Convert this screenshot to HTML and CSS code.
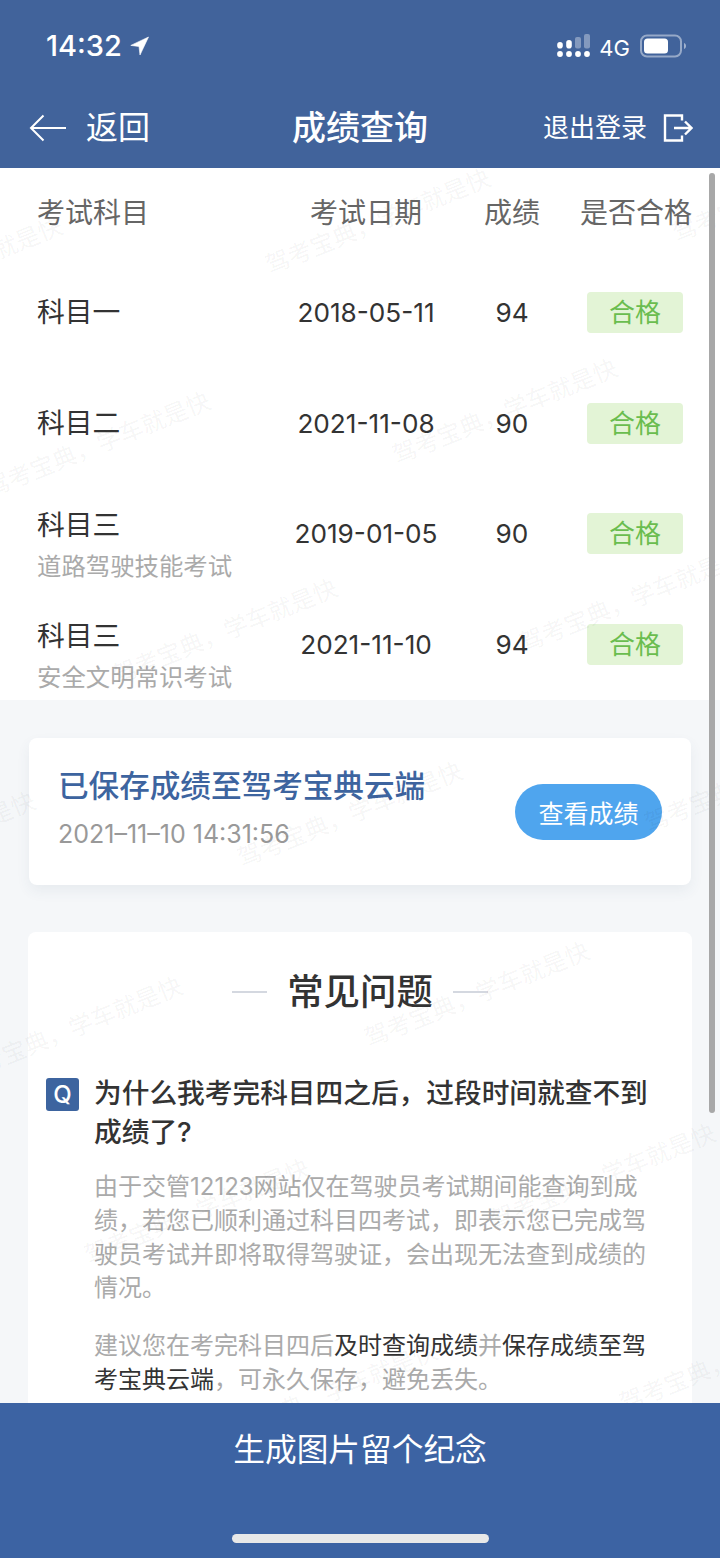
FILE: index.html
```html
<!DOCTYPE html>
<html lang="zh-CN">
<head>
<meta charset="utf-8">
<title>成绩查询</title>
<link rel="stylesheet" href="styles.css">
</head>
<body>
<div class="phone">
  <header class="top">
    <div class="status">
      <div class="clock">
        <span>14:32</span>
        <svg class="loc" viewBox="0 0 20 20" width="20" height="20"><path d="M18.500 1 .8 9.400 9 10.500 10 19z" fill="#fff" stroke="#fff" stroke-width=".6" stroke-linejoin="round"/></svg>
      </div>
      <div class="status-right">
        <svg class="signal" viewBox="0 0 33 24" width="33" height="24">
          <g fill="#fff">
            <circle cx="3" cy="20" r="2.900"/><circle cx="12" cy="20" r="2.900"/><circle cx="21" cy="20" r="2.900"/><circle cx="30" cy="20" r="2.900"/>
            <rect x="0.200" y="8" width="5.600" height="6.500" rx="2.800"/><rect x="9.200" y="6" width="5.600" height="8.500" rx="2.800"/>
          </g>
          <g fill="#fff" opacity=".35">
            <rect x="18" y="3" width="6" height="11.500" rx="2"/><rect x="27" y="0" width="6" height="14.500" rx="2"/>
          </g>
        </svg>
        <span class="net">4G</span>
        <svg class="battery" viewBox="0 0 46 24" width="46" height="24">
          <rect x="1" y="1.500" width="40" height="21" rx="6" fill="none" stroke="#fff" stroke-opacity=".45" stroke-width="2"/>
          <rect x="4" y="4.500" width="24" height="15" rx="3.500" fill="#fff"/>
          <path d="M44 9c1.500.5 2 1.700 2 3s-.5 2.500-2 3z" fill="#fff" fill-opacity=".5"/>
        </svg>
      </div>
    </div>
    <nav class="nav">
      <div class="back">
        <svg viewBox="0 0 38 28" width="38" height="28"><path d="M37 14H2M14.500 1.500 2 14l12.500 12.500" fill="none" stroke="#fff" stroke-width="2"/></svg>
        <span>返回</span>
      </div>
      <h1 class="title">成绩查询</h1>
      <div class="logout">
        <span>退出登录</span>
        <svg viewBox="0 0 30 28" width="30" height="28"><path d="M19 6.500V1.500H2v25h17v-5M11 14h17.500M22 7.500l6.500 6.500-6.500 6.500" fill="none" stroke="#fff" stroke-width="2.400"/></svg>
      </div>
    </nav>
  </header>

  <main class="content">
    <section class="table">
      <div class="row head">
        <div class="c-sub">考试科目</div><div class="c-date">考试日期</div><div class="c-score">成绩</div><div class="c-pass">是否合格</div>
      </div>
      <div class="row">
        <div class="c-sub">科目一</div><div class="c-date">2018-05-11</div><div class="c-score">94</div><div class="c-pass"><span class="badge">合格</span></div>
      </div>
      <div class="row">
        <div class="c-sub">科目二</div><div class="c-date">2021-11-08</div><div class="c-score">90</div><div class="c-pass"><span class="badge">合格</span></div>
      </div>
      <div class="row">
        <div class="c-sub two">科目三<small>道路驾驶技能考试</small></div><div class="c-date">2019-01-05</div><div class="c-score">90</div><div class="c-pass"><span class="badge">合格</span></div>
      </div>
      <div class="row">
        <div class="c-sub two">科目三<small>安全文明常识考试</small></div><div class="c-date">2021-11-10</div><div class="c-score">94</div><div class="c-pass"><span class="badge">合格</span></div>
      </div>
    </section>

    <section class="card saved">
      <div class="saved-text">
        <h2>已保存成绩至驾考宝典云端</h2>
        <p>2021–11–10 14:31:56</p>
      </div>
      <button class="view">查看成绩</button>
    </section>

    <section class="card faq">
      <h2 class="faq-title">常见问题</h2>
      <div class="question"><span class="q">Q</span><h3>为什么我考完科目四之后&#65292;过段时间就查不到成绩了?</h3></div>
      <div class="answer">
        <p>由于交管12123网站仅在驾驶员考试期间能查询到成绩&#65292;若您已顺利通过科目四考试&#65292;即表示您已完成驾驶员考试并即将取得驾驶证&#65292;会出现无法查到成绩的情况。</p>
        <p>建议您在考完科目四后<b>及时查询成绩</b>并<b>保存成绩至驾考宝典云端</b>&#65292;可永久保存&#65292;避免丢失。</p>
      </div>
    </section>

    <div class="marks" aria-hidden="true">
      <span class="wm w1">驾考宝典&#65292;学车就是快</span><span class="wm w2">驾考宝典&#65292;学车就是快</span><span class="wm w3">驾考宝典&#65292;学车就是快</span>
      <span class="wm w4">驾考宝典&#65292;学车就是快</span><span class="wm w5">驾考宝典&#65292;学车就是快</span><span class="wm w6">驾考宝典&#65292;学车就是快</span>
      <span class="wm w7">驾考宝典&#65292;学车就是快</span><span class="wm w8">驾考宝典&#65292;学车就是快</span><span class="wm w9">驾考宝典&#65292;学车就是快</span>
      <span class="wm w10">驾考宝典&#65292;学车就是快</span><span class="wm w11">驾考宝典&#65292;学车就是快</span><span class="wm w12">驾考宝典&#65292;学车就是快</span>
      <span class="wm w13">驾考宝典&#65292;学车就是快</span><span class="wm w14">驾考宝典&#65292;学车就是快</span><span class="wm w15">驾考宝典&#65292;学车就是快</span>
      <span class="wm w16">驾考宝典&#65292;学车就是快</span>
    </div>
    <div class="scrollbar"></div>
  </main>

  <footer class="bottom">
    <div class="bottom-label">生成图片留个纪念</div>
    <div class="home"></div>
  </footer>
</div>
</body>
</html>
```

FILE: styles.css
```css
* { box-sizing: border-box; }
html, body { margin: 0; padding: 0; }
body { width: 720px; height: 1558px; overflow: hidden; font-family: "Inter", "Noto Sans CJK SC", sans-serif; }
h1, h2, h3, p { margin: 0; font-weight: 400; }

.phone { width: 720px; height: 1558px; display: flex; flex-direction: column; background: #f5f7f9; overflow: hidden; }

.top { height: 168px; background: #41639b; color: #fff; flex: none; }
.status { height: 88px; display: flex; justify-content: space-between; align-items: flex-start; padding: 30px 34px 0 46px; }
.clock { display: flex; align-items: center; gap: 8px; font-size: 29px; font-weight: 500; line-height: 32px; }
.status-right { display: flex; align-items: center; gap: 9px; height: 32px; }
.net { font-size: 22px; line-height: 24px; padding-top: 3px; }
.battery { margin-left: 1px; }

.nav { height: 80px; padding: 0 27px 0 29px; display: flex; align-items: center; justify-content: space-between; position: relative; }
.back { display: flex; align-items: center; gap: 19px; font-size: 32px; line-height: 40px; }
.title { position: absolute; left: 0; right: 0; text-align: center; font-size: 34px; font-weight: 500; line-height: 44px; }
.logout { display: flex; align-items: center; gap: 16px; font-size: 26px; line-height: 36px; }

.content { flex: 1; position: relative; overflow: hidden; min-height: 0; }

.table { background: #fff; height: 532px; }
.row { display: grid; grid-template-columns: 241px 176px 116px 130px; align-items: center; height: 110.750px; padding-left: 37px; color: #333; font-size: 26.200px; text-align: center; }
.row.head { height: 89px; color: #666; font-size: 28px; line-height: 40px; }
.row .c-sub { text-align: left; font-size: 27.800px; line-height: 40px; }
.row.head .c-sub { font-size: 28px; }
.row.head .c-pass { padding-left: 2px; }
.row .c-sub.two { padding-top: 22px; }
.c-pass { white-space: nowrap; }
.c-sub small { display: block; font-size: 24.400px; line-height: 36px; margin-top: 3px; color: #aaa; }
.badge { display: block; width: 96px; height: 41px; margin: 0 auto; line-height: 41px; border-radius: 4px; background: #e3f4d6; color: #6abd4f; font-size: 26px; }

.card { background: #fff; border-radius: 8px; }
.saved { margin: 38px 29px 0; height: 147px; display: flex; align-items: flex-start; justify-content: space-between; padding: 28px 29px 0 29px; box-shadow: 0 6px 14px rgba(60, 80, 110, .07); }
.saved h2 { font-size: 30.600px; line-height: 40px; font-weight: 500; color: #3d649f; }
.saved p { font-size: 25px; line-height: 36px; color: #999; margin-top: 10px; }
.view { width: 147px; height: 56px; margin-top: 18px; border: 0; border-radius: 28px; background: #4fa5ee; color: #fff; font: inherit; font-size: 25px; padding: 0; }

.faq { margin: 47px 28px 0; padding: 36px 44px 0 18px; height: 600px; }
.faq-title { display: flex; align-items: center; justify-content: center; gap: 20px; padding-left: 26px; font-size: 36.400px; line-height: 48px; font-weight: 500; color: #333; }
.faq-title::before, .faq-title::after { content: ""; width: 35px; height: 2px; background: #d4d8e0; }
.question { display: flex; gap: 15px; margin-top: 58px; }
.q { flex: none; width: 33px; height: 33px; margin-top: 4px; border-radius: 3px; background: #3d649f; color: #fff; text-align: center; font-size: 24px; line-height: 33px; font-weight: 500; }
.question h3 { font-size: 27.700px; line-height: 39px; font-weight: 500; color: #333; }
.answer { margin: 18px 0 0 48px; font-size: 24px; line-height: 33.800px; color: #aaa; }
.answer p + p { margin-top: 24px; }
.answer b { font-weight: 400; color: #333; }

.marks { position: absolute; inset: 0; pointer-events: none; }
.wm { position: absolute; width: 260px; margin: -184px 0 0 -130px; text-align: center; font-size: 24px; line-height: 32px; white-space: nowrap; color: rgba(0, 0, 0, .05); transform: rotate(-22deg); }
.w1 { left: 378px; top: 222px; }
.w2 { left: -50px; top: 270px; }
.w3 { left: 785px; top: 190px; }
.w4 { left: 505px; top: 412px; }
.w5 { left: 98px; top: 445px; }
.w6 { left: 632px; top: 600px; }
.w7 { left: 225px; top: 632px; }
.w8 { left: -77px; top: 845px; }
.w9 { left: 350px; top: 815px; }
.w10 { left: 757px; top: 780px; }
.w11 { left: 477px; top: 995px; }
.w12 { left: 70px; top: 1030px; }
.w13 { left: 603px; top: 1177px; }
.w14 { left: 197px; top: 1212px; }
.w15 { left: 325px; top: 1395px; }
.w16 { left: 732px; top: 1360px; }

.scrollbar { position: absolute; left: 709px; top: 5px; width: 6px; height: 940px; border-radius: 3px; background: #a8a8a8; }

.bottom { height: 155px; flex: none; background: #3c63a3; color: #fff; position: relative; z-index: 2; display: flex; flex-direction: column; align-items: center; padding-top: 25px; }
.bottom-label { font-size: 31.700px; line-height: 44px; }
.home { width: 257px; height: 9px; margin-top: 62px; border-radius: 5px; background: #e8e8e8; }
```
